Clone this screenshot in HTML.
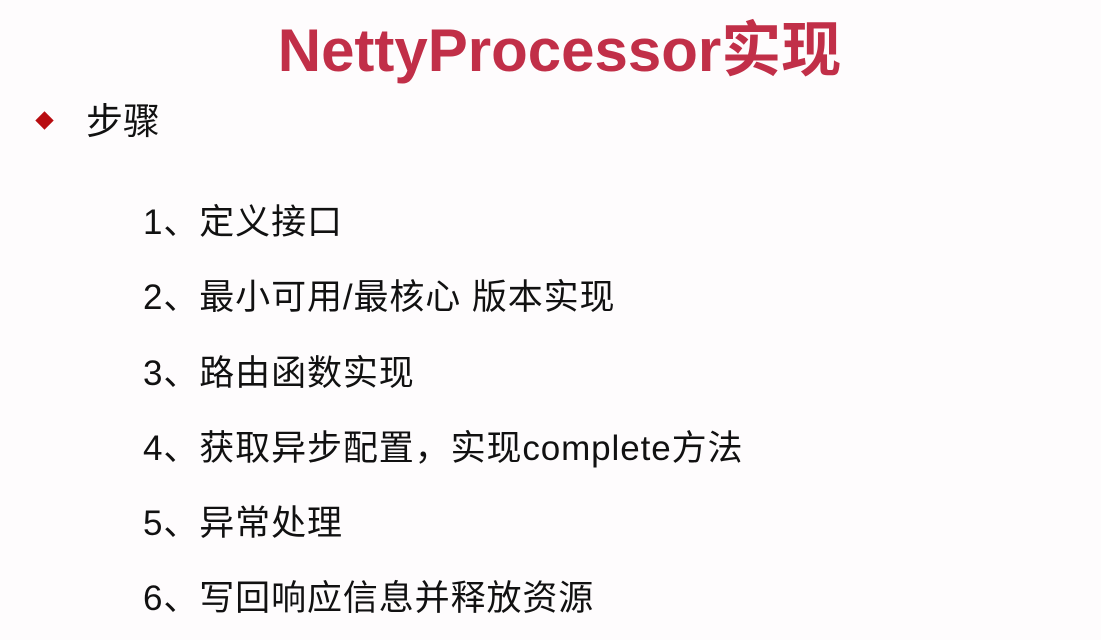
<!DOCTYPE html>
<html><head><meta charset="utf-8"><style>
html,body{margin:0;width:1101px;height:640px;overflow:hidden;background:#fefcfd;font-family:"Liberation Sans","Noto Sans CJK SC",sans-serif;color:#111;}
.t{position:absolute;left:0;width:1101px;top:18px;text-align:center;font-size:60px;font-weight:bold;color:#c12f48;line-height:66px;padding-left:18px;box-sizing:border-box;}
.b{position:absolute;left:38px;top:114px;width:13px;height:13px;background:#b80c10;transform:rotate(45deg);}
.h{position:absolute;left:86px;top:100px;font-size:37px;line-height:44px;}
.i{position:absolute;left:143px;font-size:35px;line-height:40px;letter-spacing:0.9px;}
</style></head><body>
<div class="t">NettyProcessor实现</div>
<div class="b"></div>
<div class="h">步骤</div>
<div class="i" style="top:203px">1、定义接口</div>
<div class="i" style="top:278px">2、最小可用/最核心 版本实现</div>
<div class="i" style="top:354px">3、路由函数实现</div>
<div class="i" style="top:429px">4、获取异步配置，实现complete方法</div>
<div class="i" style="top:504px">5、异常处理</div>
<div class="i" style="top:579px">6、写回响应信息并释放资源</div>
</body></html>
